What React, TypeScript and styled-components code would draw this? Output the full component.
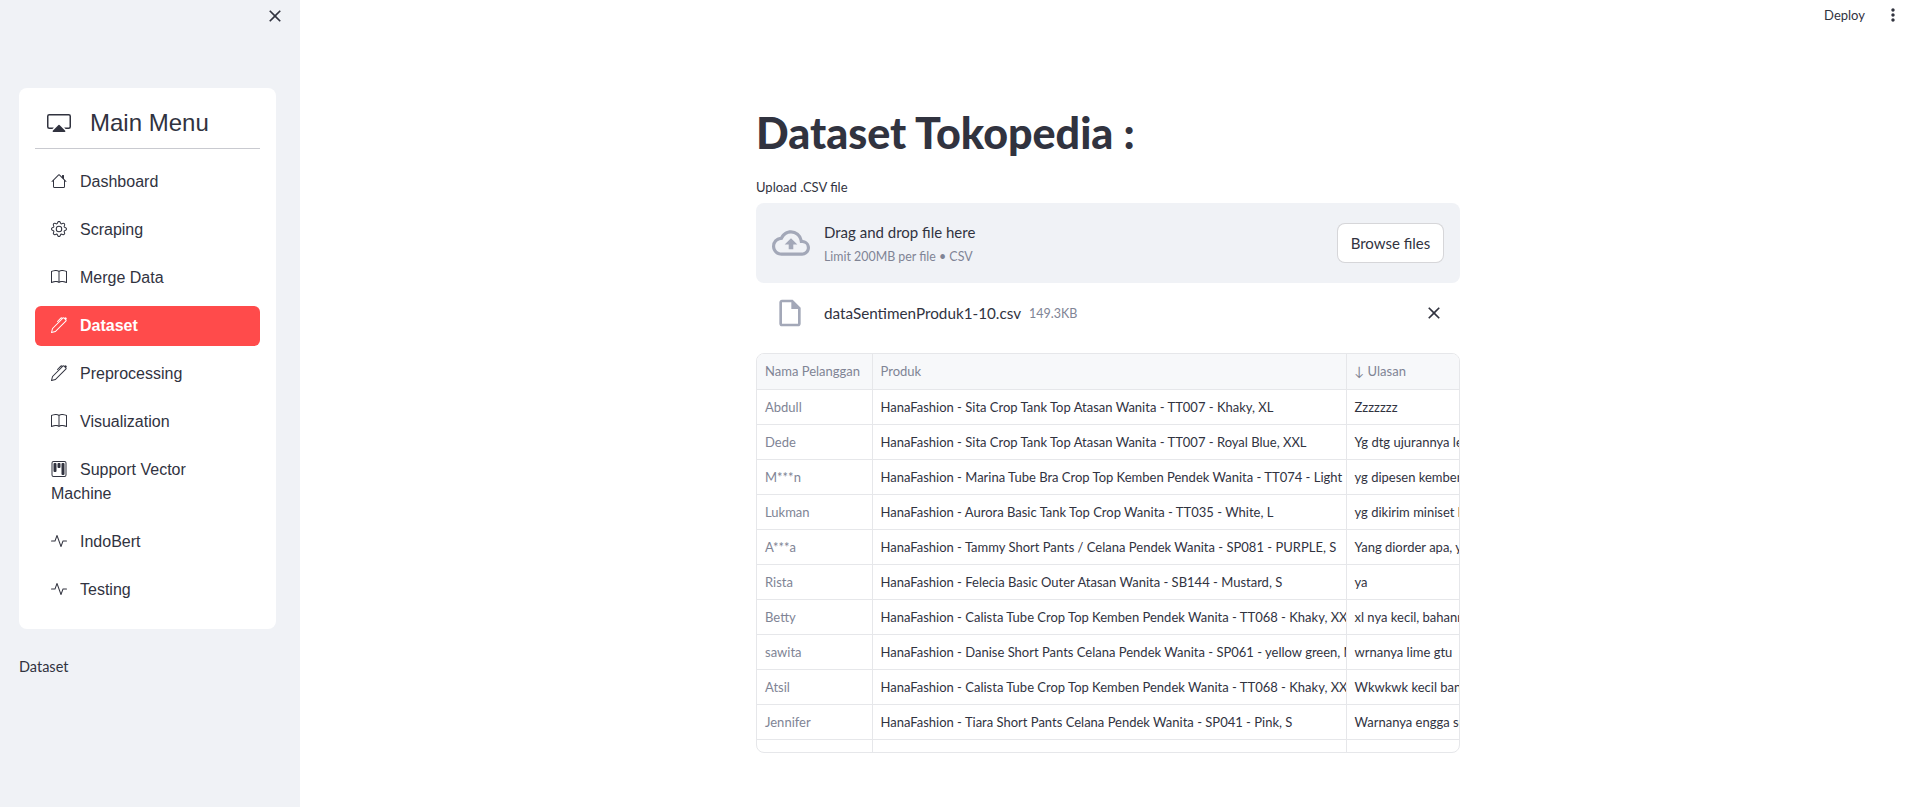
import React from 'react';
import styled, { createGlobalStyle } from 'styled-components';
import { BsActivity, BsBook, BsCast, BsGear, BsHouse, BsKanban, BsPen } from 'react-icons/bs';
import { MdOutlineCloudUpload, MdOutlineInsertDriveFile, MdClose, MdMoreVert } from 'react-icons/md';

const GlobalStyle = createGlobalStyle`
  html, body {
    margin: 0;
    padding: 0;
    height: 807px;
    overflow: hidden;
    background: #fff;
    color: #31333f;
    font-family: "Lato", "Noto Sans", sans-serif;
  }
  * { box-sizing: border-box; }
`;

const Page = styled.div`
  display: flex;
  width: 100%;
  height: 807px;
`;

const Sidebar = styled.aside`
  display: flex;
  flex-direction: column;
  width: 300px;
  flex-shrink: 0;
  background: #f0f2f6;
  padding: 6px 24px 0 19px;
`;

const CloseRow = styled.div`
  display: flex;
  justify-content: flex-end;
  height: 82px;
  margin-right: -9px;
  font-size: 20px;
  color: #31333f;
`;

const MenuCard = styled.nav`
  display: flex;
  flex-direction: column;
  width: 257px;
  height: 541px;
  background: #fff;
  border-radius: 8px;
  padding: 16px;
  font-family: "Liberation Sans", Arial, sans-serif;
`;

const MenuTitle = styled.div`
  display: flex;
  align-items: center;
  gap: 19px;
  height: 45px;
  padding-left: 12px;
  padding-bottom: 6px;
  font-size: 24px;
  color: #31333f;
  border-bottom: 1px solid #c9cad0;
`;

const MenuList = styled.div`
  display: flex;
  flex-direction: column;
  gap: 8px;
  margin-top: 13px;
`;

const MenuItem = styled.a<{ $active?: boolean }>`
  display: block;
  padding: 8px 16px;
  line-height: 24px;
  font-size: 16px;
  border-radius: 6px;
  color: ${p => (p.$active ? '#fff' : '#31333f')};
  background: ${p => (p.$active ? '#ff4b4b' : 'transparent')};
  font-weight: ${p => (p.$active ? 700 : 400)};

  svg {
    width: 16px;
    height: 16px;
    margin-right: 13px;
    vertical-align: -2px;
  }
`;

const SidebarNote = styled.p`
  margin: 28px 0 0;
  font-size: 14.5px;
  line-height: 20px;
`;

const Main = styled.main`
  display: flex;
  flex-direction: column;
  flex: 1;
  min-width: 0;
`;

const TopBar = styled.header`
  display: flex;
  justify-content: flex-end;
  align-items: center;
  gap: 18px;
  height: 30px;
  padding-right: 6px;
  font-size: 13px;
`;

const Content = styled.section`
  display: flex;
  flex-direction: column;
  width: 704px;
  margin-left: 456px;
`;

const Title = styled.h1`
  margin: 75px 0 0;
  font-size: 43px;
  line-height: 56px;
  font-weight: 900;
`;

const UploadLabel = styled.label`
  margin-top: 16px;
  font-size: 13px;
  line-height: 20px;
`;

const Dropzone = styled.div`
  display: flex;
  align-items: center;
  height: 80px;
  margin-top: 6px;
  padding: 0 16px;
  background: #f0f2f6;
  border-radius: 8px;
`;

const CloudIcon = styled(MdOutlineCloudUpload)`
  width: 38px;
  height: 38px;
  color: #a3a8b8;
  margin-right: 14px;
  flex-shrink: 0;
`;

const DropText = styled.div`
  display: flex;
  flex-direction: column;
  flex: 1;
  gap: 5px;
`;

const DropTitle = styled.span`
  font-size: 15px;
  line-height: 22px;
`;

const DropHint = styled.span`
  font-size: 12.4px;
  line-height: 18px;
  color: #808495;
`;

const BrowseButton = styled.button`
  width: 107px;
  height: 40px;
  background: #fff;
  border: 1px solid rgba(49, 51, 63, 0.2);
  border-radius: 8px;
  font: inherit;
  font-size: 15px;
  color: #31333f;
`;

const FileRow = styled.div`
  display: flex;
  align-items: center;
  height: 60px;
  padding-left: 18px;
  padding-right: 16px;
`;

const FileIcon = styled(MdOutlineInsertDriveFile)`
  width: 32px;
  height: 32px;
  color: #a3a8b8;
  margin-right: 18px;
  flex-shrink: 0;
`;

const FileName = styled.span`
  font-size: 15.25px;
  margin-right: 8px;
`;

const FileSize = styled.span`
  flex: 1;
  font-size: 12.5px;
  color: #808495;
`;

const TableFrame = styled.div`
  height: 400px;
  margin-top: 10px;
  border: 1px solid #e6e7ea;
  border-radius: 8px;
  overflow: hidden;
`;

const Table = styled.table`
  width: 100%;
  table-layout: fixed;
  border-collapse: collapse;
  font-size: 13px;
`;

const Th = styled.th`
  height: 35px;
  padding: 0 8px;
  background: #f7f8fa;
  color: #808495;
  font-weight: 400;
  text-align: left;
  white-space: nowrap;
  overflow: hidden;
  border-bottom: 1px solid #e6e7ea;
  border-right: 1px solid #e6e7ea;
  &:last-child { border-right: none; }
`;

const Td = styled.td<{ $index?: boolean }>`
  height: 35px;
  padding: 0 0 0 8px;
  color: ${p => (p.$index ? '#808495' : '#31333f')};
  white-space: nowrap;
  overflow: hidden;
  border-bottom: 1px solid #e6e7ea;
  border-right: 1px solid #e6e7ea;
  &:last-child { border-right: none; }
`;

const rows = [
  ['Abdull', 'HanaFashion - Sita Crop Tank Top Atasan Wanita - TT007 - Khaky, XL', 'Zzzzzzz'],
  ['Dede', 'HanaFashion - Sita Crop Tank Top Atasan Wanita - TT007 - Royal Blue, XXL', 'Yg dtg ujurannya lebih kecil dari'],
  ['M***n', 'HanaFashion - Marina Tube Bra Crop Top Kemben Pendek Wanita - TT074 - Light Blue, L', 'yg dipesen kemben yang datang'],
  ['Lukman', 'HanaFashion - Aurora Basic Tank Top Crop Wanita - TT035 - White, L', 'yg dikirim miniset bukan tanktop'],
  ['A***a', 'HanaFashion - Tammy Short Pants / Celana Pendek Wanita - SP081 - PURPLE, S', 'Yang diorder apa, yang datang'],
  ['Rista', 'HanaFashion - Felecia Basic Outer Atasan Wanita - SB144 - Mustard, S', 'ya'],
  ['Betty', 'HanaFashion - Calista Tube Crop Top Kemben Pendek Wanita - TT068 - Khaky, XXL', 'xl nya kecil, bahannya tipis sekali'],
  ['sawita', 'HanaFashion - Danise Short Pants Celana Pendek Wanita - SP061 - yellow green, M', 'wrnanya lime gtu'],
  ['Atsil', 'HanaFashion - Calista Tube Crop Top Kemben Pendek Wanita - TT068 - Khaky, XXL', 'Wkwkwk kecil banget ukurannya'],
  ['Jennifer', 'HanaFashion - Tiara Short Pants Celana Pendek Wanita - SP041 - Pink, S', 'Warnanya engga sesuai pesanan'],
  ['', '', ''],
];

export default function App() {
  return (
    <>
      <GlobalStyle />
      <Page>
        <Sidebar>
          <CloseRow><MdClose /></CloseRow>
          <MenuCard>
            <MenuTitle><BsCast size={24} />Main Menu</MenuTitle>
            <MenuList>
              <MenuItem><BsHouse />Dashboard</MenuItem>
              <MenuItem><BsGear />Scraping</MenuItem>
              <MenuItem><BsBook />Merge Data</MenuItem>
              <MenuItem $active><BsPen />Dataset</MenuItem>
              <MenuItem><BsPen />Preprocessing</MenuItem>
              <MenuItem><BsBook />Visualization</MenuItem>
              <MenuItem><BsKanban />Support Vector Machine</MenuItem>
              <MenuItem><BsActivity />IndoBert</MenuItem>
              <MenuItem><BsActivity />Testing</MenuItem>
            </MenuList>
          </MenuCard>
          <SidebarNote>Dataset</SidebarNote>
        </Sidebar>
        <Main>
          <TopBar>
            <span>Deploy</span>
            <MdMoreVert size={20} />
          </TopBar>
          <Content>
            <Title>Dataset Tokopedia :</Title>
            <UploadLabel>Upload .CSV file</UploadLabel>
            <Dropzone>
              <CloudIcon />
              <DropText>
                <DropTitle>Drag and drop file here</DropTitle>
                <DropHint>Limit 200MB per file • CSV</DropHint>
              </DropText>
              <BrowseButton>Browse files</BrowseButton>
            </Dropzone>
            <FileRow>
              <FileIcon />
              <FileName>dataSentimenProduk1-10.csv</FileName>
              <FileSize>149.3KB</FileSize>
              <MdClose size={20} />
            </FileRow>
            <TableFrame>
              <Table>
                <colgroup>
                  <col style={{ width: 115 }} />
                  <col style={{ width: 474 }} />
                  <col />
                </colgroup>
                <thead>
                  <tr>
                    <Th>Nama Pelanggan</Th>
                    <Th>Produk</Th>
                    <Th>↓ Ulasan</Th>
                  </tr>
                </thead>
                <tbody>
                  {rows.map((r, i) => (
                    <tr key={i}>
                      <Td $index>{r[0]}</Td>
                      <Td>{r[1]}</Td>
                      <Td>{r[2]}</Td>
                    </tr>
                  ))}
                </tbody>
              </Table>
            </TableFrame>
          </Content>
        </Main>
      </Page>
    </>
  );
}
